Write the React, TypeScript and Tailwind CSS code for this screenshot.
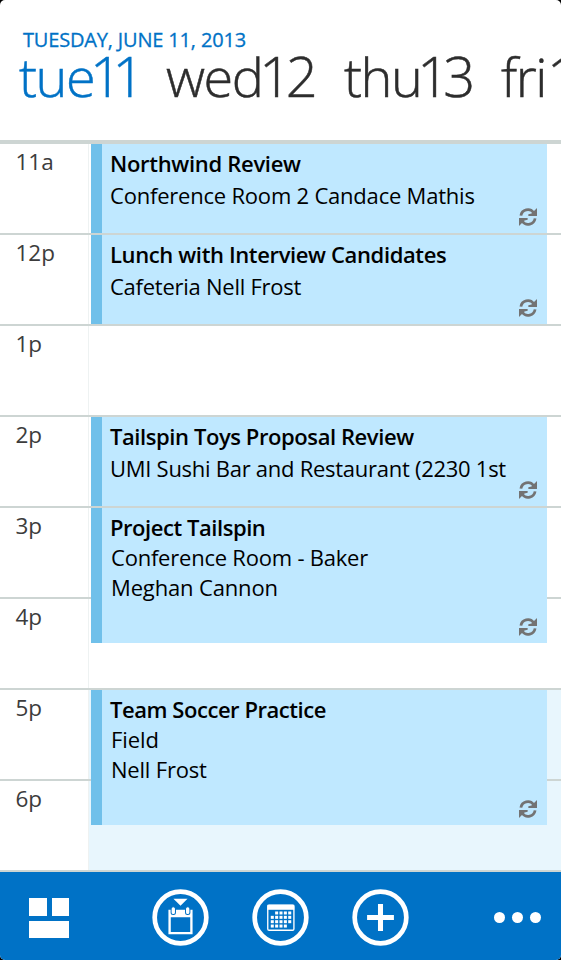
import { FC, ReactNode } from "react";
import clsx from "clsx";

interface CalendarEvent {
  title: string;
  titleClass: string;
  details: { text: string; className: string }[];
  slot: string;
  tall?: boolean;
}

const days = [
  { name: "tue", date: "11", className: "w-[147px] text-[#0072c6]", dateClass: "-ml-[4px] tracking-[-9.5px]" },
  { name: "wed", date: "12", className: "w-[178px]", dateClass: "-ml-[3px] tracking-[-5.5px]" },
  { name: "thu", date: "13", className: "w-[157px]", dateClass: "-ml-[4px] tracking-[-6px]" },
  { name: "fri", date: "14", className: "", dateClass: "ml-px tracking-[-5px]" },
];

const hours = ["11a", "12p", "1p", "2p", "3p", "4p", "5p", "6p"];

const events: CalendarEvent[] = [
  {
    title: "Northwind Review",
    titleClass: "tracking-[-0.3px]",
    details: [{ text: "Conference Room 2 Candace Mathis", className: "tracking-[-0.21px]" }],
    slot: "row-start-1 h-[89px]",
  },
  {
    title: "Lunch with Interview Candidates",
    titleClass: "tracking-[-0.37px]",
    details: [{ text: "Cafeteria Nell Frost", className: "tracking-[-0.25px]" }],
    slot: "row-start-2 h-[89px]",
  },
  {
    title: "Tailspin Toys Proposal Review",
    titleClass: "tracking-[-0.42px]",
    details: [{ text: "UMI Sushi Bar and Restaurant (2230 1st", className: "tracking-[-0.27px]" }],
    slot: "row-start-4 h-[89px]",
  },
  {
    title: "Project Tailspin",
    titleClass: "tracking-[-0.45px]",
    details: [
      { text: "Conference Room - Baker", className: "tracking-[-0.22px]" },
      { text: "Meghan Cannon", className: "tracking-[-0.15px]" },
    ],
    slot: "row-start-5 row-span-2 h-[135px]",
    tall: true,
  },
  {
    title: "Team Soccer Practice",
    titleClass: "tracking-[-0.45px]",
    details: [
      { text: "Field", className: "tracking-[-0.1px]" },
      { text: "Nell Frost", className: "tracking-[-0.2px]" },
    ],
    slot: "row-start-7 row-span-2 h-[135px]",
    tall: true,
  },
];

const RecurringIcon: FC = () => (
  <svg viewBox="0 0 52 52" className="absolute right-[10px] bottom-[7px] size-[18px]" fill="none">
    {[0, 180].map((angle) => (
      <g key={angle} transform={`rotate(${angle} 26 26)`}>
        <path d="M5.5 22A20.5 20.5 0 0 1 42 13" stroke="#737373" strokeWidth="8" />
        <path d="M52 0V23H27V18L36 16L47 5Z" fill="#737373" />
      </g>
    ))}
  </svg>
);

const EventBlock: FC<{ event: CalendarEvent }> = ({ event }) => (
  <article
    className={clsx(
      "relative col-start-2 mt-[2px] mr-[14px] ml-[3px] overflow-hidden border-l-[11px] border-[#70c0ea] bg-[#bfe8ff] pl-2 text-[22px] whitespace-nowrap text-black",
      event.slot,
      event.tall ? "pt-[4px] leading-[30px]" : "pt-[3px] leading-[32px]",
    )}
  >
    <h2 className={clsx("font-semibold", event.titleClass)}>{event.title}</h2>
    {event.details.map((line) => (
      <p key={line.text} className={clsx(line.className, event.tall && "pl-px")}>
        {line.text}
      </p>
    ))}
    <RecurringIcon />
  </article>
);

const RoundButton: FC<{ label: string; children: ReactNode }> = ({ label, children }) => (
  <button aria-label={label} className="size-[57px]">
    <svg viewBox="0 0 170 170" className="size-full" fill="none">
      <circle cx="85" cy="85" r="77" stroke="#fff" strokeWidth="14" />
      {children}
    </svg>
  </button>
);

// day cells of the month glyph, [column, row]
const monthCells = [0, 1, 2, 3]
  .flatMap((row) => [0, 1, 2, 3, 4].map((col) => [col, row]))
  .filter(([col, row]) => !(row === 0 && col === 0) && !(row === 3 && col === 4));

const AppBar: FC = () => (
  <footer className="flex h-[88px] items-start bg-[#0072c6]">
    <button aria-label="Home" className="mt-[26px] ml-[29px] grid h-10 w-10 grid-cols-2 gap-[5px]">
      <span className="bg-white" />
      <span className="bg-white" />
      <span className="col-span-2 bg-white" />
    </button>
    <div className="mt-[17px] ml-[83px] flex gap-[43px]">
      <RoundButton label="Today">
        <path d="M64 29H106L85 50Z" fill="#fff" />
        <path d="M49 62H121V135H49ZM56 84V128H114V84Z" fill="#fff" fillRule="evenodd" />
        <rect x="57" y="53" width="13" height="23" rx="6" fill="#fff" stroke="#0072c6" strokeWidth="3" />
        <rect x="100" y="53" width="13" height="23" rx="6" fill="#fff" stroke="#0072c6" strokeWidth="3" />
      </RoundButton>
      <RoundButton label="Month">
        <rect x="47" y="48" width="78" height="75" rx="4" stroke="#fff" strokeWidth="4" />
        <path d="M46 47H126V62H46Z" fill="#fff" />
        {monthCells.map(([col, row]) => (
          <rect key={`${col}-${row}`} x={56 + col * 13} y={67 + row * 13} width="9" height="9" fill="#fff" />
        ))}
      </RoundButton>
      <RoundButton label="New">
        <path d="M85 45V125M45 85H125" stroke="#fff" strokeWidth="15" />
      </RoundButton>
    </div>
    <button aria-label="More" className="mt-[40px] ml-[84.5px] flex gap-[7px]">
      <span className="size-[11px] rounded-full bg-white" />
      <span className="size-[11px] rounded-full bg-white" />
      <span className="size-[11px] rounded-full bg-white" />
    </button>
  </footer>
);

export default function App() {
  return (
    <div className="h-[960px] w-[561px] bg-black font-['Open_Sans','Noto_Sans',sans-serif]">
      <main className="h-full overflow-hidden rounded-[5px] bg-white">
        <header className="h-[142px] overflow-hidden border-b-2 border-[#cdd5d3] pt-[26px] whitespace-nowrap">
          <p className="pl-[23px] text-[20px] leading-[28px] tracking-[-0.17px] text-[#0072c6] [-webkit-text-stroke:0.3px_#0072c6]">
            TUESDAY, JUNE 11, 2013
          </p>
          <nav className="flex pl-[19px] text-[54px] leading-[42px] font-light tracking-[-1.5px] text-[#2d2d2d] [-webkit-text-stroke:0.5px_currentColor]">
            {days.map((day) => (
              <div key={day.name} className={clsx("flex shrink-0 items-baseline", day.className)}>
                {day.name}
                <span className={clsx("text-[56px] leading-[42px]", day.dateClass)}>{day.date}</span>
              </div>
            ))}
          </nav>
        </header>
        <section className="grid h-[730px] grid-cols-[88px_1fr] grid-rows-[repeat(8,91px)_2px]">
          {hours.map((hour, i) => (
            <div
              key={hour}
              className="col-span-2 col-start-1 grid grid-cols-subgrid border-t-2 border-[#cdd5d3]"
              style={{ gridRow: i + 1 }}
            >
              <div className="pl-[15.5px] text-[22.5px] leading-[35px] text-[#3c3c3c]">{hour}</div>
              <div className={clsx("border-l border-[#eef2f2]", i > 5 && "bg-[#e8f6fd]")} />
            </div>
          ))}
          {events.map((event) => (
            <EventBlock key={event.title} event={event} />
          ))}
          <div className="col-span-2 col-start-1 row-start-9 bg-[#cdd5d3]" />
        </section>
        <AppBar />
      </main>
    </div>
  );
}
